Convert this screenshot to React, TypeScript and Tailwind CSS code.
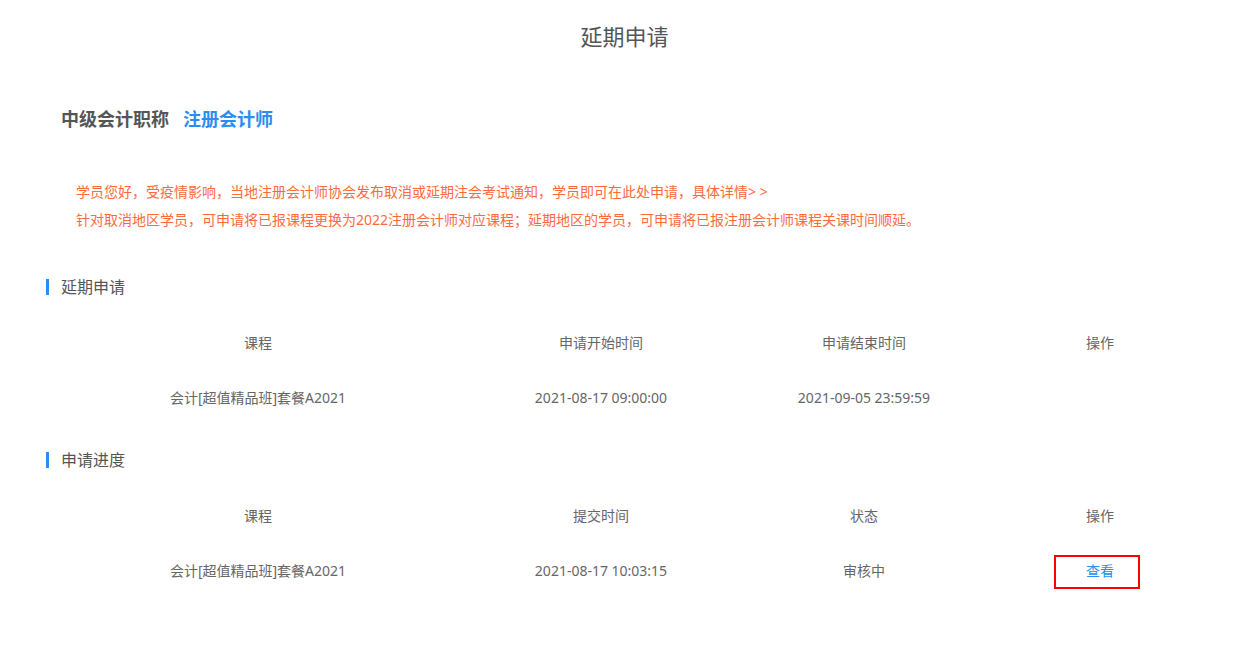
import React from "react";

const font = { fontFamily: '"Noto Sans", "Noto Sans CJK SC", sans-serif' };

const cols = "grid grid-cols-[396px_290px_236px_236px] pl-[60px]";

type Row = string[];

function SectionTitle({ children }: { children: React.ReactNode }) {
  return (
    <div className="flex items-center pl-[46px]">
      <span className="h-[16px] w-[3px] bg-[#2d8cf0]" />
      <span className="ml-[12px] text-[16px] leading-[20px] text-[#555]">{children}</span>
    </div>
  );
}

function Table({ head, rows, last }: { head: Row; rows: Row[]; last?: React.ReactNode }) {
  return (
    <div className="text-[14px] text-[#666]">
      <div className={`${cols} h-[55px] items-center text-center`}>
        {head.map((h) => (
          <div key={h}>{h}</div>
        ))}
      </div>
      {rows.map((r, i) => (
        <div key={i} className={`${cols} h-[55px] items-center text-center`}>
          {r.map((c, j) => (
            <div key={j}>{c}</div>
          ))}
          <div className="flex justify-center">{last}</div>
        </div>
      ))}
    </div>
  );
}

export default function App() {
  return (
    <div className="min-h-screen bg-white" style={font}>
      <h1 className="pt-[21px] text-center text-[22px] leading-[30px] text-[#555]">延期申请</h1>

      <div className="mt-[56px] flex items-center gap-[14px] pl-[61px] text-[18px] font-bold leading-[24px]">
        <span className="text-[#555]">中级会计职称</span>
        <span className="text-[#2d8cf0]">注册会计师</span>
      </div>

      <div className="mt-[47px] pl-[76px] text-[14px] leading-[28px] text-[#ff6a3d]">
        <p>学员您好，受疫情影响，当地注册会计师协会发布取消或延期注会考试通知，学员即可在此处申请，具体详情&gt; &gt;</p>
        <p>针对取消地区学员，可申请将已报课程更换为2022注册会计师对应课程；延期地区的学员，可申请将已报注册会计师课程关课时间顺延。</p>
      </div>

      <div className="mt-[43px]">
        <SectionTitle>延期申请</SectionTitle>
      </div>
      <div className="mt-[18px]">
        <Table
          head={["课程", "申请开始时间", "申请结束时间", "操作"]}
          rows={[["会计[超值精品班]套餐A2021", "2021-08-17 09:00:00", "2021-09-05 23:59:59"]]}
        />
      </div>

      <div className="mt-[25px]">
        <SectionTitle>申请进度</SectionTitle>
      </div>
      <div className="mt-[18px]">
        <Table
          head={["课程", "提交时间", "状态", "操作"]}
          rows={[["会计[超值精品班]套餐A2021", "2021-08-17 10:03:15", "审核中"]]}
          last={
            <button className="ml-[-6px] mt-[2px] flex h-[34px] w-[86px] items-center justify-center border-2 border-[#ff0000] pb-[2px] pl-[6px] text-[14px] text-[#2d8cf0]">
              查看
            </button>
          }
        />
      </div>
    </div>
  );
}
